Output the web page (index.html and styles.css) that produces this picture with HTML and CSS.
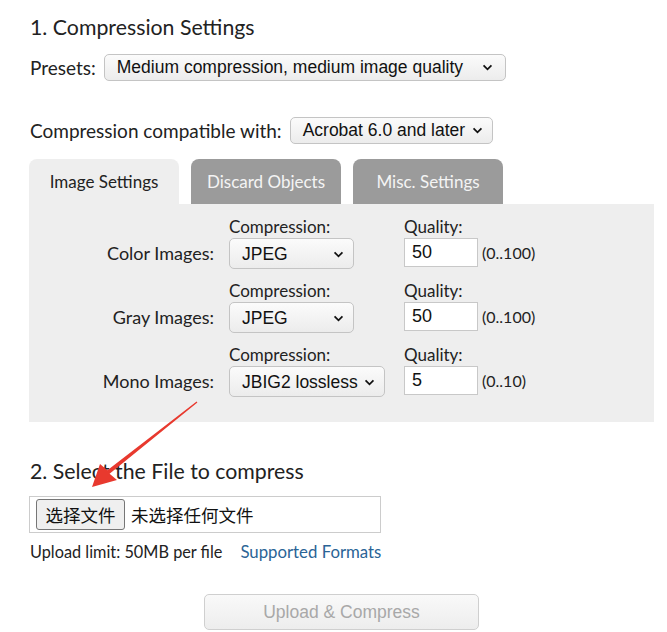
FILE: index.html
```html
<!DOCTYPE html>
<html lang="en">
<head>
<meta charset="utf-8">
<title>Compress PDF</title>
<link rel="stylesheet" href="styles.css">
</head>
<body>
<div class="page">
  <h2 class="section-title">1. Compression Settings</h2>
  <div class="line presets">
    <span class="line-label">Presets:</span>
    <div class="select sel-presets"><span>Medium compression, medium image quality</span><svg class="chev" viewBox="0 0 12 8" width="11" height="7"><path d="M1.5 1.5 L6 6 L10.5 1.5" fill="none" stroke="#111" stroke-width="2"/></svg></div>
  </div>
  <div class="line compat">
    <span class="line-label">Compression compatible with:</span>
    <div class="select sel-compat"><span>Acrobat 6.0 and later</span><svg class="chev" viewBox="0 0 12 8" width="11" height="7"><path d="M1.5 1.5 L6 6 L10.5 1.5" fill="none" stroke="#111" stroke-width="2"/></svg></div>
  </div>

  <div class="tabs">
    <div class="tab active">Image Settings</div>
    <div class="tab">Discard Objects</div>
    <div class="tab">Misc. Settings</div>
  </div>
  <div class="panel">
    <div class="img-row">
      <div class="row-label">Color Images:</div>
      <div class="field">
        <div class="field-label">Compression:</div>
        <div class="select small w125"><span>JPEG</span><svg class="chev" viewBox="0 0 12 8" width="11" height="7"><path d="M1.5 1.5 L6 6 L10.5 1.5" fill="none" stroke="#111" stroke-width="2"/></svg></div>
      </div>
      <div class="field">
        <div class="field-label">Quality:</div>
        <div class="quality"><div class="num">50</div><span class="range">(0..100)</span></div>
      </div>
    </div>
    <div class="img-row">
      <div class="row-label">Gray Images:</div>
      <div class="field">
        <div class="field-label">Compression:</div>
        <div class="select small w125"><span>JPEG</span><svg class="chev" viewBox="0 0 12 8" width="11" height="7"><path d="M1.5 1.5 L6 6 L10.5 1.5" fill="none" stroke="#111" stroke-width="2"/></svg></div>
      </div>
      <div class="field">
        <div class="field-label">Quality:</div>
        <div class="quality"><div class="num">50</div><span class="range">(0..100)</span></div>
      </div>
    </div>
    <div class="img-row">
      <div class="row-label">Mono Images:</div>
      <div class="field">
        <div class="field-label">Compression:</div>
        <div class="select small w156"><span>JBIG2 lossless</span><svg class="chev" viewBox="0 0 12 8" width="11" height="7"><path d="M1.5 1.5 L6 6 L10.5 1.5" fill="none" stroke="#111" stroke-width="2"/></svg></div>
      </div>
      <div class="field">
        <div class="field-label">Quality:</div>
        <div class="quality"><div class="num">5</div><span class="range">(0..10)</span></div>
      </div>
    </div>
  </div>

  <h2 class="section-title second">2. Select the File to compress</h2>
  <div class="filebox">
    <div class="file-btn">选择文件</div>
    <span class="file-none">未选择任何文件</span>
  </div>
  <div class="limit">
    <span>Upload limit: 50MB per file</span>
    <a class="formats" href="#">Supported Formats</a>
  </div>
  <div class="submit-wrap">
    <div class="submit">Upload &amp; Compress</div>
  </div>
</div>
<svg class="arrow" viewBox="0 0 667 632" width="667" height="632">
  <polygon points="196.6,401.5 107.4,470.2 100,464 92,487 117,480 109.6,473.8 197.4,402.5" fill="#e8392e"/>
</svg>
</body>
</html>
```

FILE: styles.css
```css
html, body {
  margin: 0;
  padding: 0;
  background: #fff;
}
body {
  font-family: "Lato", "Noto Sans CJK SC", sans-serif;
  color: #222;
  font-size: 18px;
}
.page {
  padding: 12px 13px 0 29px;
}
.section-title {
  margin: 0;
  padding-left: 1px;
  font-weight: 400;
  font-size: 21.3px;
  line-height: 30px;
  color: #222;
}
.section-title.second {
  margin-top: 34px;
}
.line {
  display: flex;
  align-items: center;
  padding-left: 1px;
}
.presets {
  margin-top: 12px;
  gap: 8px;
}
.compat {
  margin-top: 36px;
  gap: 8px;
}
.line-label {
  font-size: 19px;
}
.select {
  display: flex;
  align-items: center;
  justify-content: space-between;
  box-sizing: border-box;
  height: 27px;
  padding: 0 12px 0 12px;
  border: 1px solid #c4c4c4;
  border-radius: 5px;
  background: linear-gradient(#fbfbfb, #ececec);
  font-family: "Liberation Sans", Arial, sans-serif;
  font-size: 17.5px;
  color: #111;
  white-space: nowrap;
}
.sel-presets {
  width: 402px;
}
.sel-compat {
  width: 203px;
  padding-left: 12px;
  padding-right: 9px;
}
.chev {
  flex: none;
}
.tabs {
  display: flex;
  gap: 12px;
  margin-top: 15px;
}
.tab {
  width: 150px;
  height: 45px;
  box-sizing: border-box;
  display: flex;
  align-items: center;
  justify-content: center;
  border-radius: 8px 8px 0 0;
  background: #9b9b9b;
  color: #f4f4f4;
  font-size: 17px;
}
.tab.active {
  background: #eeeeee;
  color: #222;
}
.panel {
  background: #eeeeee;
  padding: 13px 0 25px;
  display: flex;
  flex-direction: column;
  gap: 12px;
}
.img-row {
  display: grid;
  grid-template-columns: 185px 160px auto;
  column-gap: 15px;
  align-items: start;
}
.row-label {
  align-self: end;
  text-align: right;
  font-size: 18px;
  line-height: 31px;
}
.field {
  display: flex;
  flex-direction: column;
  gap: 1px;
}
.field-label {
  font-size: 17px;
  line-height: 20px;
}
.select.small {
  height: 31px;
  padding: 1px 9px 0 12px;
}
.w125 { width: 125px; }
.w156 { width: 156px; padding-right: 8px; }
.quality {
  display: flex;
  align-items: center;
  gap: 4px;
}
.num {
  box-sizing: border-box;
  width: 74px;
  height: 29px;
  border: 1px solid #c8c8c8;
  background: #fff;
  padding-left: 7px;
  display: flex;
  align-items: center;
  font-family: "Liberation Sans", Arial, sans-serif;
  font-size: 18px;
  color: #111;
}
.range {
  font-size: 16px;
}
.filebox {
  margin-top: 10px;
  box-sizing: border-box;
  width: 352px;
  height: 37px;
  border: 1px solid #cccccc;
  display: flex;
  align-items: center;
  gap: 6px;
  padding-left: 6px;
  font-family: "Noto Sans CJK SC", sans-serif;
  font-size: 17.5px;
}
.file-btn {
  box-sizing: border-box;
  height: 31px;
  width: 89px;
  border: 1px solid #767676;
  border-radius: 3px;
  background: #efefef;
  display: flex;
  align-items: center;
  justify-content: center;
  color: #111;
}
.file-none {
  color: #111;
}
.limit {
  margin-top: 9px;
  display: flex;
  gap: 18px;
  font-size: 16.3px;
  line-height: 20px;
  padding-left: 1px;
}
.formats {
  color: #2a6496;
  text-decoration: none;
  font-size: 16.8px;
}
.submit-wrap {
  display: flex;
  justify-content: center;
  margin-top: 32px;
}
.submit {
  box-sizing: border-box;
  width: 275px;
  height: 36px;
  border: 1px solid #cfcfcf;
  border-radius: 5px;
  background: linear-gradient(#f9f9f9, #ededed);
  display: flex;
  align-items: center;
  justify-content: center;
  font-family: "Liberation Sans", Arial, sans-serif;
  font-size: 17.5px;
  color: #a8a8a8;
}
.arrow {
  position: absolute;
  top: 0;
  left: 0;
  pointer-events: none;
}
```
